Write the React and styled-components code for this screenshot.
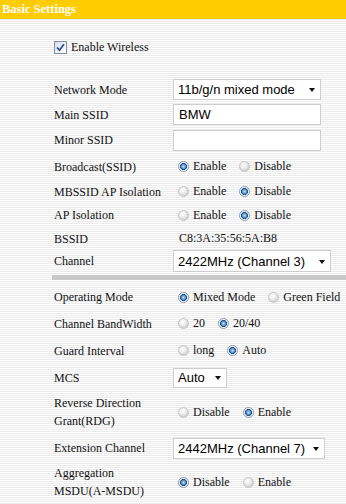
import React from 'react'
import styled, { createGlobalStyle } from 'styled-components'

const GlobalStyle = createGlobalStyle`
    html, body {
        margin: 0;
        padding: 0;
        background: #fff;
    }
`

const Page = styled.div`
    width: 346px;
    height: 504px;
    overflow: hidden;
    background: repeating-linear-gradient(to bottom, #ffffff 0px, #ffffff 1px, #ebebeb 1px, #ebebeb 2px);
    font-family: "Liberation Serif", "Times New Roman", serif;
    font-size: 12px;
    color: #111;
`
const Header = styled.div`
    height: 19px;
    background: #ffcc00;
    color: #fff;
    font-weight: bold;
    font-size: 12.5px;
    line-height: 18px;
    padding-left: 2px;
`
const Content = styled.div`
    padding-left: 54px;
`
const WirelessRow = styled.label`
    display: flex;
    align-items: center;
    height: 20px;
    margin-top: 18px;
    margin-bottom: 20px;
`
const CheckBox = styled.span`
    width: 11px;
    height: 11px;
    border: 1px solid #7d8ea6;
    background: linear-gradient(135deg, #d6dde8, #ffffff);
    margin-right: 4px;
    display: flex;
    align-items: center;
    justify-content: center;
`
const Row = styled.div`
    display: flex;
    align-items: center;
    height: ${p => p.$h}px;
    white-space: nowrap;
`
const Label = styled.div`
    width: 119px;
    flex-shrink: 0;
    line-height: 18px;
`
const Value = styled.div`
    padding-left: 6px;
`
const Select = styled.div`
    box-sizing: border-box;
    flex-shrink: 0;
    width: ${p => p.$w}px;
    height: ${p => p.$h || 21}px;
    border: 1px solid #cdcdcd;
    background: #fff;
    display: flex;
    align-items: center;
    padding: 0 5px 0 4px;
    font-family: "Liberation Sans", Arial, sans-serif;
    font-size: 13px;
    color: #000;
`
const Arrow = styled.span`
    margin-left: auto;
    width: 0;
    height: 0;
    border-left: 3.5px solid transparent;
    border-right: 3.5px solid transparent;
    border-top: 4px solid #111;
    margin-top: 1px;
`
const TextInput = styled.div`
    box-sizing: border-box;
    width: 148px;
    height: 21px;
    border: 1px solid #cdcdcd;
    background: #fff;
    padding-left: 5px;
    display: flex;
    align-items: center;
    font-family: "Liberation Sans", Arial, sans-serif;
    font-size: 13px;
    color: #000;
`
const Options = styled.div`
    display: flex;
    align-items: center;
    flex-shrink: 0;
`
const Option = styled.label`
    display: flex;
    align-items: center;
    margin-right: 8px;
`
const RadioDot = styled.span`
    box-sizing: border-box;
    width: 11px;
    height: 11px;
    border-radius: 50%;
    margin: 0 4px 0 5px;
    border: 1px solid ${p => (p.$on ? '#8a9bb0' : '#c4c4c4')};
    background: ${p => p.$on
        ? 'radial-gradient(circle at 50% 50%, #cfe3f7 0, #5d93c9 2px, #1a4f86 3.2px, #e9eef4 3.8px, #ffffff 5px)'
        : 'radial-gradient(circle at 40% 35%, #ffffff 0, #eeeeee 3px, #d3d3d3 5.5px)'};
`
const Divider = styled.div`
    height: 5px;
    margin: 3px 0 4px -2px;
    background: #c9c9c9;
`

const Radios = ({ items, on }) => (
    <Options>
        {items.map((t, i) => (
            <Option key={t}>
                <RadioDot $on={i === on} />
                {t}
            </Option>
        ))}
    </Options>
)

const App = () => {
    return (
        <Page>
            <GlobalStyle />
            <Header>Basic Settings</Header>
            <Content>
                <WirelessRow>
                    <CheckBox>
                        <svg width="9" height="9" viewBox="0 0 9 9">
                            <path d="M1 4.5 L3.5 7.2 L8 1.2" fill="none" stroke="#2b4f8c" strokeWidth="1.8" />
                        </svg>
                    </CheckBox>
                    Enable Wireless
                </WirelessRow>

                <Row $h={25}>
                    <Label>Network Mode</Label>
                    <Select $w={148}>11b/g/n mixed mode <Arrow /></Select>
                </Row>
                <Row $h={25}>
                    <Label>Main SSID</Label>
                    <TextInput>BMW</TextInput>
                </Row>
                <Row $h={26}>
                    <Label>Minor SSID</Label>
                    <TextInput />
                </Row>
                <Row $h={27}>
                    <Label>Broadcast(SSID)</Label>
                    <Radios items={['Enable', 'Disable']} on={0} />
                </Row>
                <Row $h={23}>
                    <Label>MBSSID AP Isolation</Label>
                    <Radios items={['Enable', 'Disable']} on={1} />
                </Row>
                <Row $h={24}>
                    <Label>AP Isolation</Label>
                    <Radios items={['Enable', 'Disable']} on={1} />
                </Row>
                <Row $h={23}>
                    <Label>BSSID</Label>
                    <Value>C8:3A:35:56:5A:B8</Value>
                </Row>
                <Row $h={22}>
                    <Label>Channel</Label>
                    <Select $w={158} $h={22}>2422MHz (Channel 3) <Arrow /></Select>
                </Row>
            </Content>
            <Content>
                <Divider />
            </Content>
            <Content>
                <Row $h={26}>
                    <Label>Operating Mode</Label>
                    <Radios items={['Mixed Mode', 'Green Field']} on={0} />
                </Row>
                <Row $h={27}>
                    <Label>Channel BandWidth</Label>
                    <Radios items={['20', '20/40']} on={1} />
                </Row>
                <Row $h={27}>
                    <Label>Guard Interval</Label>
                    <Radios items={['long', 'Auto']} on={1} />
                </Row>
                <Row $h={27}>
                    <Label>MCS</Label>
                    <Select $w={54} $h={20}>Auto <Arrow /></Select>
                </Row>
                <Row $h={42}>
                    <Label>Reverse Direction<br />Grant(RDG)</Label>
                    <Radios items={['Disable', 'Enable']} on={1} />
                </Row>
                <Row $h={30}>
                    <Label>Extension Channel</Label>
                    <Select $w={152}>2442MHz (Channel 7) <Arrow /></Select>
                </Row>
                <Row $h={38}>
                    <Label>Aggregation<br />MSDU(A-MSDU)</Label>
                    <Radios items={['Disable', 'Enable']} on={0} />
                </Row>
            </Content>
        </Page>
    )
}

export default App
